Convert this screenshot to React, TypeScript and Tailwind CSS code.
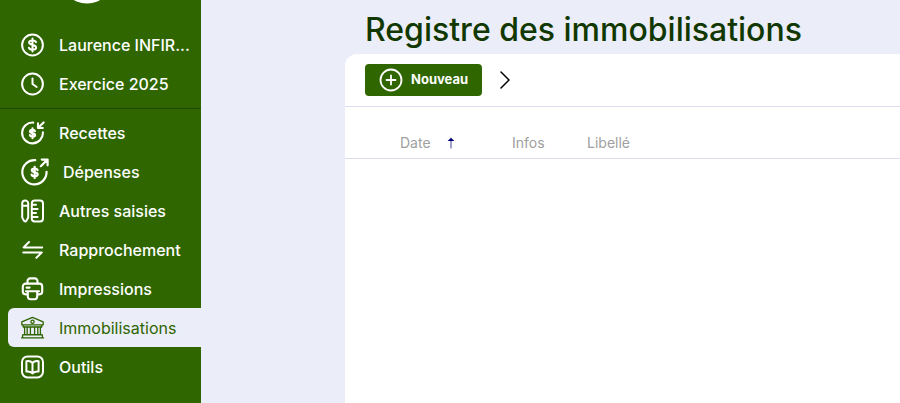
import React from 'react';

interface NavItem {
  label: string;
  icon: React.ReactNode;
  active?: boolean;
}

interface IconProps {
  size?: number;
  strokeWidth?: number;
  children: React.ReactNode;
}

const Icon: React.FC<IconProps> = ({ size = 24, strokeWidth = 2, children }) => (
  <svg
    width={size}
    height={size}
    viewBox="0 0 24 24"
    fill="none"
    stroke="currentColor"
    strokeWidth={strokeWidth}
    strokeLinecap="round"
    strokeLinejoin="round"
    className="shrink-0"
    aria-hidden="true"
  >
    {children}
  </svg>
);

const DollarIcon = () => (
  <Icon strokeWidth={2}>
    <circle cx="11.5" cy="12" r="10.4" />
    <path d="M15 9.2C14.8 8 13.6 7.4 11.5 7.4s-3.4.8-3.4 2.2c0 3.2 7 1.5 7 4.8 0 1.5-1.4 2.3-3.6 2.3S8.1 16 7.9 14.7M11.5 5.6v12.8" />
  </Icon>
);

const ClockIcon = () => (
  <Icon strokeWidth={2}>
    <circle cx="11.5" cy="12" r="10.4" />
    <path d="M11.5 6.5V12l4.2 3" />
  </Icon>
);

const IncomeIcon = () => (
  <Icon strokeWidth={2.1}>
    <path d="M12.2 1.6A10.4 10.4 0 1 0 21.9 11.4" />
    <path d="M22.6 1.4l-5.4 5.4M17 2.4V7h4.8" />
    <path d="M14 10.2c-.2-1-1-1.3-2.5-1.3S9 9.5 9 10.4c0 2.3 5.1 1.2 5.1 3.5 0 1.1-1 1.7-2.6 1.7s-2.4-.5-2.6-1.5M11.5 7.4v9.8" />
  </Icon>
);

const ExpenseIcon = () => (
  <Icon size={28} strokeWidth={1.9}>
    <path d="M12.2 1.8A10.4 10.4 0 1 0 21.9 11.8" />
    <path d="M17 7l5.6-5.6M17.8 1.3h5v5" />
    <path d="M14.2 10.4c-.2-1-1-1.4-2.5-1.4s-2.4.6-2.4 1.5c0 2.3 5 1.2 5 3.5 0 1.1-1 1.7-2.6 1.7s-2.4-.5-2.6-1.5M11.7 7.5v9.7" />
  </Icon>
);

const EntriesIcon = () => (
  <Icon strokeWidth={2}>
    <path d="M1.2 4.6a3 3 0 0 1 6 0v14l-1.8 3.1a1.4 1.4 0 0 1-2.4 0l-1.8-3.1zM1.2 6.8h6" />
    <rect x="10.8" y="1.4" width="11.2" height="21.2" rx="3" />
    <path d="M11 5.8h4M11 9.9h5.6M11 14h4M11 18.1h5.6" />
  </Icon>
);

const ReconcileIcon = () => (
  <Icon strokeWidth={2}>
    <path d="M8 4L2.6 9.4h18.6M2.2 14.4h18.6L15.4 19.8" />
  </Icon>
);

const PrinterIcon = () => (
  <Icon strokeWidth={2.1}>
    <path d="M6.5 6.5V4a2.6 2.6 0 0 1 2.6-2.6h4.8A2.6 2.6 0 0 1 16.5 4v2.5" />
    <path d="M6.2 17.4H4.6A2.8 2.8 0 0 1 1.8 14.6V9.4a2.8 2.8 0 0 1 2.8-2.8h13.8a2.8 2.8 0 0 1 2.8 2.8v5.2a2.8 2.8 0 0 1-2.8 2.8h-1.6" />
    <path d="M5 14.2h13M6.8 14.4v5.2a2.6 2.6 0 0 0 2.6 2.6h4.2a2.6 2.6 0 0 0 2.6-2.6v-5.2M5.6 10.6h3" />
  </Icon>
);

const BankIcon = () => (
  <Icon strokeWidth={1.3}>
    <path d="M.8 8.8V5.8L11.5 1.4 22.2 5.8v3zM2.2 9v2h18.6V9M2.4 18.6h18.2M.4 21.8h22.2M1.6 21.6v-2.8h19.8v2.8" />
    <circle cx="11.5" cy="5.8" r="1.6" />
    <path d="M3.6 11.2v7.2M6.2 11.2v7.2M9.4 11.2v7.2M13.6 11.2v7.2M16.8 11.2v7.2M19.4 11.2v7.2" />
  </Icon>
);

const ToolsIcon = () => (
  <Icon strokeWidth={2}>
    <rect x="1" y="1.4" width="21" height="21" rx="5.6" />
    <path d="M11.5 8v10.4M5.4 6.3c2.4-.5 4.7.1 6.1 1.7 1.4-1.6 3.7-2.2 6.1-1.7v10.2c-2.4-.3-4.7.3-6.1 1.9-1.4-1.6-3.7-2.2-6.1-1.9z" />
  </Icon>
);

const accountItems: NavItem[] = [
  { label: 'Laurence INFIR...', icon: <DollarIcon /> },
  { label: 'Exercice 2025', icon: <ClockIcon /> },
];

const menuItems: NavItem[] = [
  { label: 'Recettes', icon: <IncomeIcon /> },
  { label: 'Dépenses', icon: <ExpenseIcon /> },
  { label: 'Autres saisies', icon: <EntriesIcon /> },
  { label: 'Rapprochement', icon: <ReconcileIcon /> },
  { label: 'Impressions', icon: <PrinterIcon /> },
  { label: 'Immobilisations', icon: <BankIcon />, active: true },
  { label: 'Outils', icon: <ToolsIcon /> },
];

const NavLink: React.FC<{ item: NavItem }> = ({ item }) => (
  <li>
    <a
      href="#"
      aria-current={item.active ? 'page' : undefined}
      className={
        item.active
          ? 'flex h-[39px] items-center gap-3.5 rounded-l-md bg-[#ebedf9] pl-[13px] text-[#2f6600]'
          : 'flex h-[39px] items-center gap-3.5 pl-[13px] font-medium text-white'
      }
    >
      {item.icon}
      <span className="whitespace-nowrap">{item.label}</span>
    </a>
  </li>
);

const Sidebar = () => (
  <aside className="w-[201px] shrink-0 bg-[#2f6600] text-base">
    <div className="flex h-[25px] justify-center pr-7">
      <svg width="54" height="4" viewBox="0 50 54 4" aria-hidden="true">
        <circle cx="27" cy="26.5" r="27" fill="#fff" />
      </svg>
    </div>
    <nav>
      <ul className="border-b border-[#1f4a00] pb-[5px] pl-2">
        {accountItems.map((item) => (
          <NavLink key={item.label} item={item} />
        ))}
      </ul>
      <ul className="pt-1 pl-2">
        {menuItems.map((item) => (
          <NavLink key={item.label} item={item} />
        ))}
      </ul>
    </nav>
  </aside>
);

const Toolbar = () => (
  <div className="flex items-center gap-3 border-b border-[#dcdef0] px-5 py-2.5">
    <button
      type="button"
      className="flex h-8 items-center gap-2 rounded-sm bg-[#2f6600] px-3.5 text-[13px] font-bold text-white"
    >
      <Icon strokeWidth={1.8}>
        <circle cx="12" cy="12" r="10.5" />
        <path d="M12 7.5v9M7.5 12h9" />
      </Icon>
      Nouveau
    </button>
    <button type="button" aria-label="Suite" className="flex text-black">
      <Icon strokeWidth={1.5}>
        <path d="M7 4l8 8-8 8" />
      </Icon>
    </button>
  </div>
);

const AssetTable = () => (
  <table className="w-full table-fixed text-left text-sm text-[#a0a0a0]">
    <thead>
      <tr className="h-[51px] border-b border-[#dcdef0] align-bottom">
        <th className="w-[167px] pb-[5px] pl-[55px] font-normal">
          <span className="flex items-center gap-4">
            Date
            <svg width="8" height="12" viewBox="0 0 8 12" aria-hidden="true">
              <path d="M4 3v8.5" stroke="#6d70b4" strokeWidth="1.3" />
              <path d="M4 .8L7.4 4H.6z" fill="#00007c" />
            </svg>
          </span>
        </th>
        <th className="w-[75px] pb-[5px] font-normal">Infos</th>
        <th className="pb-[5px] font-normal">Libellé</th>
      </tr>
    </thead>
  </table>
);

const App = () => (
  <div className="flex min-h-screen bg-[#ebedf9] font-['Inter',sans-serif]">
    <Sidebar />
    <main className="flex min-w-0 flex-1 flex-col pl-36">
      <h1 className="pt-2.5 pb-1 pl-5 text-[32px] leading-10 font-medium text-[#113800]">Registre des immobilisations</h1>
      <section className="flex-1 rounded-tl-xl bg-white">
        <Toolbar />
        <AssetTable />
      </section>
    </main>
  </div>
);

export default App;
